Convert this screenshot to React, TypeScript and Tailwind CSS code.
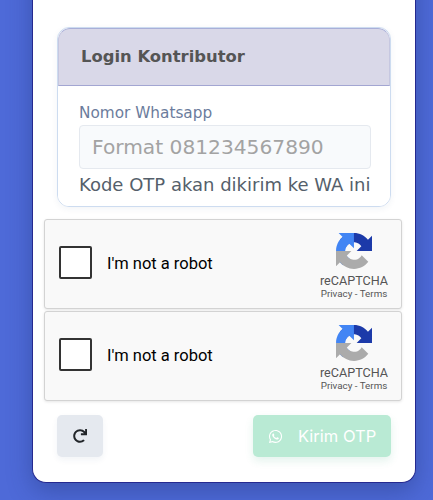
import { FaRedo, FaWhatsapp } from 'react-icons/fa';

function RecaptchaLogo() {
    const arc = 'M64 31.955l-.033-1.37V4.687l-7.16 7.16C50.948 4.674 42.033.093 32.05.093 21.66.093 12.44 5.053 6.603 12.733l11.738 11.86a15.55 15.55 0 0 1 4.754-5.334c2.05-1.6 4.952-2.906 8.968-2.906.485 0 .86.057 1.135.163 4.976.393 9.288 3.14 11.828 7.124l-8.307 8.307c10.522-.04 22.4-.066 27.295 0';
    return (
        <svg viewBox="0 0 64 64" className="h-[36px] w-[36px]">
            <path d={arc} fill="#1c3aa9" />
            <path d={arc} fill="#4285f4" transform="rotate(-90 32 32)" />
            <path d={arc} fill="#ababab" transform="rotate(180 32 32)" />
        </svg>
    );
}

function Recaptcha() {
    return (
        <div className="flex h-[90px] w-[358px] items-center rounded-[3px] border border-[#d3d3d3] bg-[#f9f9f9] pl-[14px] pr-[12px] shadow-[0_1px_3px_rgba(0,0,0,0.1)] [font-family:Roboto,sans-serif]">
            <div className="mb-[3px] h-[33px] w-[33px] rounded-[2px] border-2 border-[#333] bg-white" />
            <span className="ml-[15px] mt-[1px] text-[16.5px] text-black">I'm not a robot</span>
            <div className="ml-auto flex w-[70px] flex-col items-center pt-[5px] text-[#555]">
                <RecaptchaLogo />
                <span className="mt-[5px] text-[12.6px] leading-[14px]">reCAPTCHA</span>
                <span className="text-[9.8px] leading-[12px]">Privacy - Terms</span>
            </div>
        </div>
    );
}

export default function App() {
    return (
        <div className="flex h-[500px] w-[433px] flex-col justify-end overflow-hidden bg-[#4e6ad8] pb-[17px] pl-[32px]">
            <div className="flex h-[520px] w-[384px] shrink-0 flex-col justify-end rounded-b-[14px] border border-t-0 border-[#25298f] bg-white pb-[25px] shadow-[0_8px_24px_rgba(35,55,125,0.45)]">
                {/* Login card */}
                <div className="ml-[24px] w-[334px] overflow-hidden rounded-[12px] border border-[#cddcf0] shadow-[0_2px_6px_rgba(30,60,120,0.06)] [font-family:'DejaVu_Sans',sans-serif]">
                    <div className="flex h-[58px] items-center rounded-t-[12px] border border-b-[#a3a6d2] border-l-[#c6c7e0] border-r-[#c6c7e0] border-t-[#a9afd8] bg-[#d9d8e8] pl-[22px] text-[16.4px] font-bold text-[#555]">
                        Login Kontributor
                    </div>
                    <div className="bg-white px-[21px] pb-[9px] pt-[17px]">
                        <label className="block text-[15.3px] leading-[20px] text-[#6b7c9c]">Nomor Whatsapp</label>
                        <div className="mt-[2px] flex h-[44px] w-[292px] items-center rounded-[4px] border border-[#e5e9ef] bg-[#f8fafc] pl-[12px] text-[20.2px] text-[#a3a3a3]">
                            Format 081234567890
                        </div>
                        <div className="mt-[4px] whitespace-nowrap text-[18px] leading-[24px] text-[#555f6b]">Kode OTP akan dikirim ke WA ini</div>
                    </div>
                </div>

                <div className="ml-[11px] mt-[12px] flex flex-col gap-[2px]">
                    <Recaptcha />
                    <Recaptcha />
                </div>

                <div className="ml-[24px] mr-[24px] mt-[14px] flex items-center justify-between">
                    <div className="flex h-[42px] w-[46px] items-center justify-center rounded-[5px] bg-[#e5e9ef] shadow-[0_3px_6px_rgba(30,60,120,0.06)]">
                        <FaRedo className="h-[14px] w-[14px] text-[#212529]" />
                    </div>
                    <div className="flex h-[42px] w-[138px] items-center rounded-[5px] bg-[#b9ead4] pl-[15px] text-[16.5px] text-white shadow-[0_4px_8px_rgba(30,160,110,0.12)] [font-family:Inter,sans-serif]">
                        <FaWhatsapp className="h-[15px] w-[15px]" />
                        <span className="ml-[15px]">Kirim OTP</span>
                    </div>
                </div>
            </div>
        </div>
    );
}
